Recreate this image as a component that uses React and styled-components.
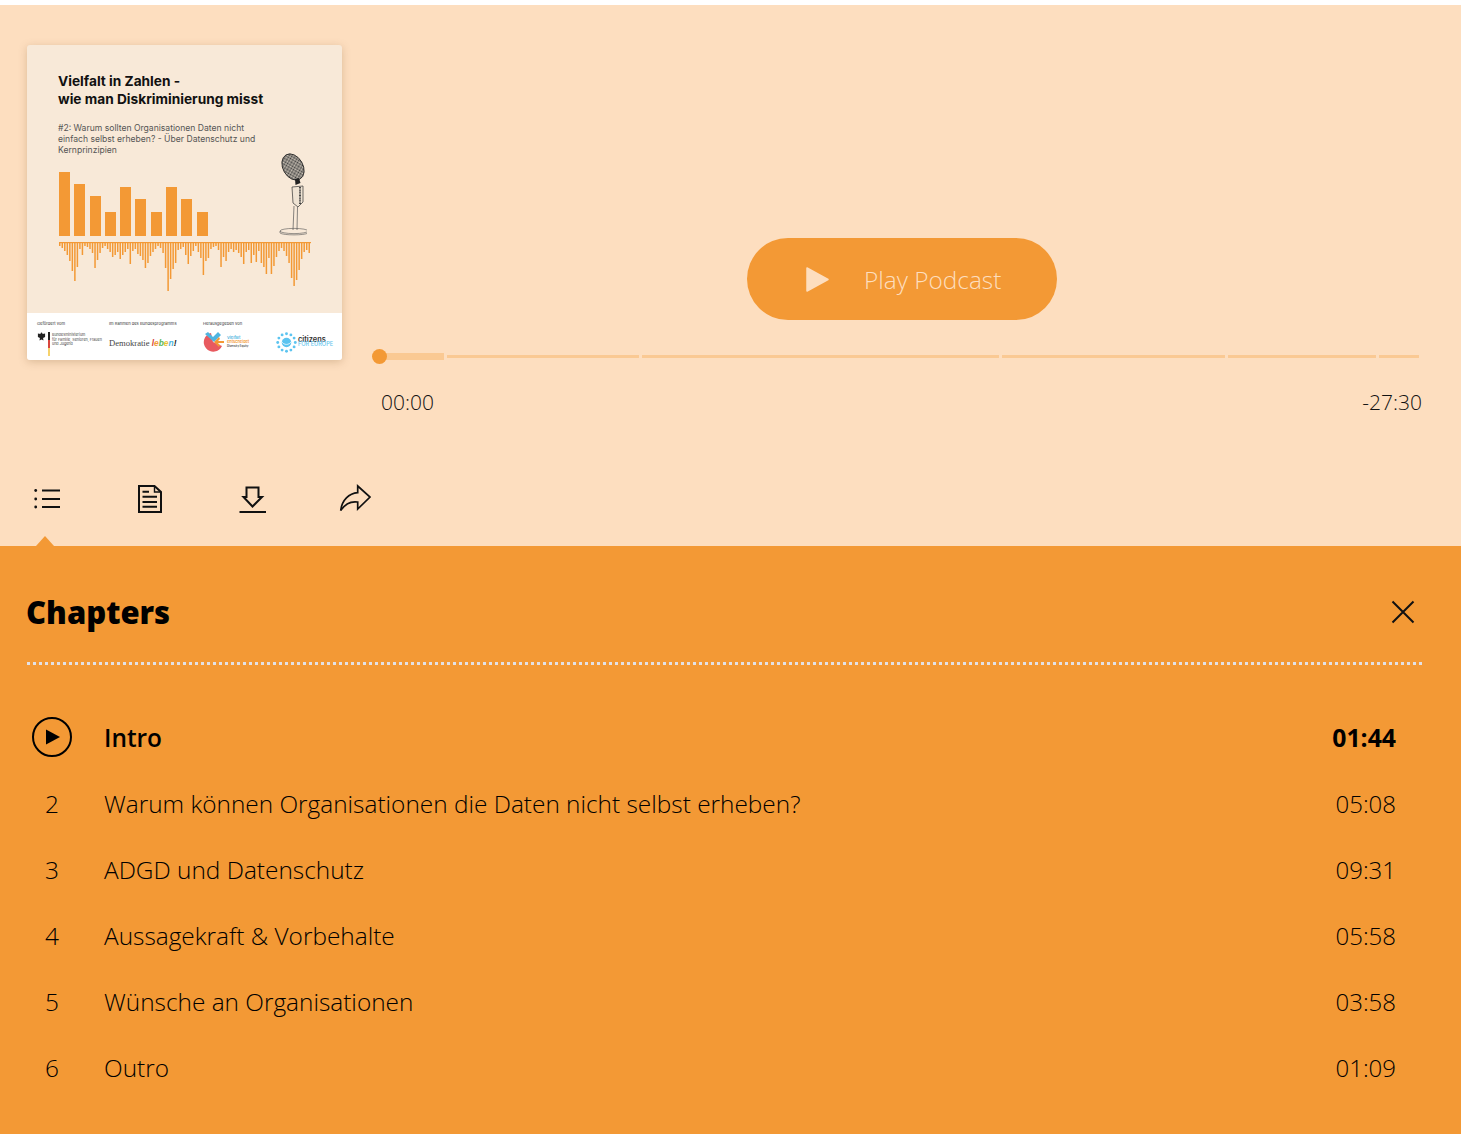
import React from "react";
import styled, { createGlobalStyle } from "styled-components";

const ORANGE = "#f39935";
const PEACH = "#fddebf";

const GlobalStyle = createGlobalStyle`
    html, body {
        margin: 0;
        padding: 0;
        background: #fff;
    }
    body {
        font-family: "Open Sans", "Noto Sans", sans-serif;
        color: #111;
    }
`;

const Page = styled.div`
    width: 1461px;
    height: 1134px;
    padding-top: 5px;
    box-sizing: border-box;
    overflow: hidden;
    display: flex;
    flex-direction: column;
`;
const Player = styled.section`
    background: ${PEACH};
    height: 541px;
    flex-shrink: 0;
    padding: 40px 39px 0 27px;
    box-sizing: border-box;
`;
const Header = styled.div`
    display: flex;
    gap: 36px;
    height: 434px;
`;

/* cover art */
const Cover = styled.div`
    width: 315px;
    height: 315px;
    flex-shrink: 0;
    border-radius: 3px;
    overflow: hidden;
    background: #f8e9d8;
    box-shadow: 0 2px 8px rgba(120, 80, 30, 0.25);
    display: flex;
    flex-direction: column;
    font-family: "Inter", "Liberation Sans", sans-serif;
`;
const Art = styled.div`
    height: 268px;
    padding: 28px 32px 0 31px;
    box-sizing: border-box;
`;
const CoverTitle = styled.div`
    font-size: 13.7px;
    font-weight: 700;
    line-height: 17.5px;
    color: #111;
`;
const CoverSub = styled.div`
    margin-top: 15px;
    width: 205px;
    font-size: 8.6px;
    line-height: 11px;
    color: #555;
`;
const BarsRow = styled.div`
    margin-top: 16px;
    margin-left: 1px;
    height: 64px;
    display: flex;
    justify-content: space-between;
    align-items: flex-end;
`;
const Bars = styled.div`
    display: flex;
    align-items: flex-end;
    gap: 4.3px;
`;
const Bar = styled.div`
    width: 11px;
    height: ${(p) => p.$h}px;
    background: ${ORANGE};
`;
const Mic = styled.svg`
    width: 30px;
    height: 84px;
    flex-shrink: 0;
    margin-right: 3px;
`;
const Wave = styled.svg`
    display: block;
    margin: 6px 0 0 1px;
    width: 252px;
    height: 50px;
`;
const Sponsors = styled.div`
    height: 47px;
    background: #fff;
    display: flex;
    padding: 8px 0 0 10px;
    box-sizing: border-box;
`;
const Sponsor = styled.div`
    width: ${(p) => p.$w}px;
    flex-shrink: 0;
`;
const SponsorLabel = styled.div`
    font-size: 4.1px;
    line-height: 5px;
    color: #333;
    white-space: nowrap;
`;
const SponsorBody = styled.div`
    margin-top: 6px;
    display: flex;
    align-items: flex-start;
    gap: ${(p) => p.$gap || 2}px;
`;
const TinyText = styled.div`
    font-size: 3.7px;
    line-height: 4.6px;
    color: #444;
    margin-top: 1px;
    white-space: nowrap;
`;
const Demokratie = styled.div`
    margin-top: 12px;
    font-family: "Liberation Serif", serif;
    font-size: 8.6px;
    line-height: 10px;
    color: #444;
    white-space: nowrap;
`;
const Leben = styled.span`
    font-family: "Liberation Sans", sans-serif;
    font-style: italic;
    font-weight: 700;
    font-size: 8.4px;
    color: ${(p) => p.$c};
`;
const LogoStack = styled.div`
    margin-top: 4px;
`;
const LogoText = styled.div`
    font-size: ${(p) => p.$s || 3.9}px;
    line-height: 4px;
    font-weight: 600;
    color: ${(p) => p.$c};
    white-space: nowrap;
`;
const EuroText = styled.div`
    margin-top: 6px;
    font-size: 7.4px;
    line-height: 4.4px;
    font-weight: 600;
    color: #333;
    white-space: nowrap;
`;
const EuroSub = styled.span`
    display: block;
    font-size: 5.6px;
    font-weight: 500;
    line-height: 5px;
    color: #66c6ee;
`;

/* player controls */
const Controls = styled.div`
    flex: 1;
    padding-top: 193px;
    min-width: 0;
`;
const PlayButton = styled.button`
    display: flex;
    align-items: center;
    width: 310px;
    height: 82px;
    margin: 0 0 29px 369px;
    padding: 0 0 0 59px;
    box-sizing: border-box;
    border: 0;
    border-radius: 41px;
    background: ${ORANGE};
    color: ${PEACH};
    font-family: inherit;
    font-weight: 300;
    font-size: 24.4px;
    gap: 35px;
`;
const Track = styled.div`
    position: relative;
    display: flex;
    align-items: center;
    gap: 3px;
    height: 15px;
    padding-right: 3px;
`;
const Knob = styled.div`
    position: absolute;
    left: -6px;
    top: 0;
    width: 15px;
    height: 15px;
    border-radius: 50%;
    background: ${ORANGE};
`;
const Segment = styled.div`
    flex: ${(p) => p.$w} 0 0;
    height: ${(p) => (p.$active ? 7 : 3)}px;
    background: #fac993;
`;
const Times = styled.div`
    display: flex;
    justify-content: space-between;
    margin-top: 23px;
    padding-left: 3px;
    font-size: 21px;
    font-weight: 300;
    line-height: 30px;
    color: #111;
`;

/* tab icons */
const Tabs = styled.div`
    display: flex;
    gap: 63px;
`;
const TabButton = styled.button`
    width: 40px;
    height: 40px;
    padding: 0;
    border: 0;
    background: none;
`;
const TabIcon = styled.svg`
    display: block;
    width: 40px;
    height: 40px;
    fill: none;
    stroke: #111;
    stroke-width: 2;
`;

/* chapters */
const Panel = styled.section`
    position: relative;
    flex: 1;
    background: ${ORANGE};
    padding: 0 39px 0 27px;

    &::before {
        content: "";
        position: absolute;
        left: 36px;
        top: -10px;
        border-left: 9.5px solid transparent;
        border-right: 9.5px solid transparent;
        border-bottom: 10px solid ${ORANGE};
    }
`;
const PanelHead = styled.div`
    display: flex;
    justify-content: space-between;
    align-items: center;
    height: 119px;
    padding-top: 16px;
    box-sizing: border-box;
    border-bottom: 3px dotted #e3e1e4;
`;
const PanelTitle = styled.h2`
    margin: 0 0 0 -1px;
    font-size: 31px;
    font-weight: 800;
    color: #000;
`;
const CloseButton = styled.button`
    width: 24px;
    height: 24px;
    padding: 0;
    margin-right: 7px;
    border: 0;
    background: none;
`;
const ChapterList = styled.ol`
    list-style: none;
    margin: 39px 0 0;
    padding: 0;
`;
const Chapter = styled.li`
    display: flex;
    align-items: center;
    height: 66px;
    font-size: 24.4px;
    font-weight: ${(p) => (p.$current ? 600 : 300)};
    color: #000;
`;
const ChapterNo = styled.div`
    width: 50px;
    text-align: center;
`;
const PlayingIcon = styled.svg`
    display: block;
    margin: 0 auto;
`;
const ChapterTitle = styled.div`
    flex: 1;
    margin-left: 27px;
`;
const ChapterTime = styled.div`
    margin-right: 26px;
    font-size: ${(p) => (p.$current ? 24.8 : 24)}px;
    font-weight: ${(p) => (p.$current ? 700 : 300)};
`;

const barHeights = [64, 52, 40, 24, 49, 37, 24, 49, 37, 24];
const waveDepths = [
    3, 5, 8, 12, 18, 28, 38, 24, 6, 12, 3, 4, 6, 10, 25, 17, 10, 5, 3, 6, 9, 14, 12, 9, 16,
    12, 9, 6, 21, 8, 6, 11, 13, 17, 25, 20, 13, 9, 6, 3, 5, 10, 25, 48, 36, 26, 20, 7, 6, 4,
    12, 21, 13, 8, 3, 9, 15, 32, 18, 15, 6, 4, 3, 7, 24, 14, 18, 9, 6, 9, 7, 10, 14, 21, 9,
    7, 20, 12, 19, 8, 20, 24, 31, 15, 31, 23, 14, 8, 5, 8, 13, 20, 35, 43, 37, 27, 16, 9, 7, 10,
];
const chapters = [
    { n: 1, title: "Intro", time: "01:44", w: 66 },
    { n: 2, title: "Warum können Organisationen die Daten nicht selbst erheben?", time: "05:08", w: 192 },
    { n: 3, title: "ADGD und Datenschutz", time: "09:31", w: 357 },
    { n: 4, title: "Aussagekraft & Vorbehalte", time: "05:58", w: 223 },
    { n: 5, title: "Wünsche an Organisationen", time: "03:58", w: 148 },
    { n: 6, title: "Outro", time: "01:09", w: 40 },
];
const ringDots = Array.from({ length: 12 }, (_, i) => (i * Math.PI) / 6);

const MicDrawing = () => (
    <Mic viewBox="0 0 30 84">
        <defs>
            <pattern id="mesh" width="2" height="2" patternUnits="userSpaceOnUse" patternTransform="rotate(-30)">
                <rect width="2" height="2" fill="#cfc6b9" />
                <rect width="1" height="1" fill="#333" />
                <rect x="1" y="1" width="1" height="1" fill="#555" />
            </pattern>
        </defs>
        <ellipse cx="16" cy="15" rx="10" ry="14" transform="rotate(-30 16 15)" fill="url(#mesh)" stroke="#222" strokeWidth="0.8" />
        <path d="M18 27 l4 -1 l1.5 5 l-5 2 z" fill="#222" />
        <path d="M15 35 L26 34 L26 50 L21 55 L16 51 Z" fill="#efe3d3" stroke="#333" strokeWidth="0.7" />
        <path d="M23 35 V52" stroke="#333" strokeWidth="1.8" strokeDasharray="1 0.6" />
        <path d="M17 54 L16 78 M20.5 55 L20 78" stroke="#555" strokeWidth="0.7" fill="none" />
        <ellipse cx="17" cy="79" rx="14" ry="2.6" fill="none" stroke="#555" strokeWidth="0.6" />
        <path d="M3 79 v2 c3 2.5 25 2.5 28 0 v-2" fill="none" stroke="#555" strokeWidth="0.6" />
    </Mic>
);

const Waveform = () => (
    <Wave viewBox="0 0 252 50">
        <rect width="252" height="1.2" fill={ORANGE} />
        {waveDepths.map((d, i) => (
            <rect key={i} x={i * 2.52} y="0" width="1.5" height={d + 1} fill={ORANGE} />
        ))}
    </Wave>
);

const Eagle = () => (
    <svg width="9" height="9" viewBox="0 0 8 9">
        <path d="M4 0.5 C5 0.5 5 2 5 2 L7.6 1.5 V5 L5.6 6 L6 8.5 L4 7.5 L2 8.5 L2.4 6 L0.4 5 V1.5 L3 2 C3 2 3 0.5 4 0.5 Z" fill="#222" />
    </svg>
);

const FlagBar = () => (
    <svg width="2" height="24" viewBox="0 0 2 24">
        <rect width="2" height="8" fill="#222" />
        <rect y="8" width="2" height="8" fill="#d8453c" />
        <rect y="16" width="2" height="8" fill="#f6d26c" />
    </svg>
);

const VielfaltLogo = () => (
    <svg width="21" height="20" viewBox="0 0 21 20">
        <path d="M8 1 L10 10 L19 14 A9.5 9.5 0 1 1 8 1 Z" fill="#e85a5f" />
        <path d="M2 2 L5 0 L10 5 L15 0 L18 3 L11 10 Z" fill="#4fb4e0" />
        <path d="M13 9 L21 9 L21 11 L13 11 Z M11 10 L16 5 L17 7 L14 10 L17 13 L16 15 Z" fill="#f39935" />
    </svg>
);

const CitizensLogo = () => (
    <svg width="21" height="21" viewBox="0 0 22 22">
        {ringDots.map((a, i) => (
            <circle key={i} cx={11 + 9.2 * Math.cos(a)} cy={11 + 9.2 * Math.sin(a)} r="1.5" fill="#5cc4f0" />
        ))}
        <circle cx="11" cy="11" r="5" fill="#5cc4f0" />
        <path d="M6 10 C8 14 14 14 16 10" stroke="#fff" strokeWidth="0.8" fill="none" />
    </svg>
);

const ListIcon = () => (
    <TabIcon viewBox="0 0 40 40">
        <path d="M15 11.5 H33 M15 20 H33 M15 28 H33" />
        <circle cx="8.7" cy="11.5" r="1.4" fill="#111" stroke="none" />
        <circle cx="8.7" cy="20" r="1.4" fill="#111" stroke="none" />
        <circle cx="8.7" cy="28" r="1.4" fill="#111" stroke="none" />
    </TabIcon>
);
const DocIcon = () => (
    <TabIcon viewBox="0 0 40 40">
        <path d="M9 7 H24.5 L31 13 V33 H9 Z" />
        <path d="M24.5 7 V13 H31" strokeWidth="1.4" />
        <path d="M12.5 12.7 H19 M12.5 17.7 H27 M12.5 23 H27 M12.5 27.7 H27" />
    </TabIcon>
);
const DownloadIcon = () => (
    <TabIcon viewBox="0 0 40 40">
        <path d="M13.5 8.5 H25.5 V18 H29 L19.5 27.5 L10.5 18 H13.5 Z" />
        <path d="M6.5 33 H33" />
    </TabIcon>
);
const ShareIcon = () => (
    <TabIcon viewBox="0 0 40 40">
        <path d="M21.7 7 L34 18 L21.7 30 V23 C15 22 9 25 4.7 31.5 C6 21 13 14.5 21.7 13.7 Z" strokeWidth="1.7" />
    </TabIcon>
);

const App = () => {
    return (
        <Page>
            <GlobalStyle />
            <Player>
                <Header>
                    <Cover>
                        <Art>
                            <CoverTitle>
                                Vielfalt in Zahlen -
                                <br />
                                wie man Diskriminierung misst
                            </CoverTitle>
                            <CoverSub>
                                #2: Warum sollten Organisationen Daten nicht einfach selbst erheben? - Über Datenschutz und Kernprinzipien
                            </CoverSub>
                            <BarsRow>
                                <Bars>
                                    {barHeights.map((h, i) => (
                                        <Bar key={i} $h={h} />
                                    ))}
                                </Bars>
                                <MicDrawing />
                            </BarsRow>
                            <Waveform />
                        </Art>
                        <Sponsors>
                            <Sponsor $w={72}>
                                <SponsorLabel>Gefördert vom</SponsorLabel>
                                <SponsorBody>
                                    <Eagle />
                                    <FlagBar />
                                    <TinyText>
                                        Bundesministerium
                                        <br />
                                        für Familie, Senioren, Frauen
                                        <br />
                                        und Jugend
                                    </TinyText>
                                </SponsorBody>
                            </Sponsor>
                            <Sponsor $w={94}>
                                <SponsorLabel>Im Rahmen des Bundesprogramms</SponsorLabel>
                                <Demokratie>
                                    Demokratie <Leben $c="#d8453c">l</Leben>
                                    <Leben $c="#f39935">e</Leben>
                                    <Leben $c="#5cb85c">b</Leben>
                                    <Leben $c="#e9c32f">e</Leben>
                                    <Leben $c="#4fb4e0">n</Leben>
                                    <Leben $c="#222">!</Leben>
                                </Demokratie>
                            </Sponsor>
                            <Sponsor $w={73}>
                                <SponsorLabel>Herausgegeben von</SponsorLabel>
                                <SponsorBody $gap={3}>
                                    <VielfaltLogo />
                                    <LogoStack>
                                        <LogoText $c="#4fb4e0">Vielfalt</LogoText>
                                        <LogoText $c="#f39935">entscheidet</LogoText>
                                        <LogoText $c="#444" $s={2.8}>Diversity Equity</LogoText>
                                    </LogoStack>
                                </SponsorBody>
                            </Sponsor>
                            <Sponsor $w={60}>
                                <SponsorLabel>&nbsp;</SponsorLabel>
                                <SponsorBody $gap={1}>
                                    <CitizensLogo />
                                    <EuroText>
                                        citizens
                                        <EuroSub>FOR EUROPE</EuroSub>
                                    </EuroText>
                                </SponsorBody>
                            </Sponsor>
                        </Sponsors>
                    </Cover>
                    <Controls>
                        <PlayButton>
                            <svg width="23" height="25" viewBox="0 0 23 25">
                                <path d="M1 1 L22 12.5 L1 24 Z" fill={PEACH} stroke={PEACH} strokeWidth="1.5" strokeLinejoin="round" />
                            </svg>
                            Play Podcast
                        </PlayButton>
                        <Track>
                            {chapters.map((c, i) => (
                                <Segment key={c.n} $w={c.w} $active={i === 0} />
                            ))}
                            <Knob />
                        </Track>
                        <Times>
                            <span>00:00</span>
                            <span>-27:30</span>
                        </Times>
                    </Controls>
                </Header>
                <Tabs>
                    <TabButton aria-label="Chapters"><ListIcon /></TabButton>
                    <TabButton aria-label="Transcript"><DocIcon /></TabButton>
                    <TabButton aria-label="Download"><DownloadIcon /></TabButton>
                    <TabButton aria-label="Share"><ShareIcon /></TabButton>
                </Tabs>
            </Player>
            <Panel>
                <PanelHead>
                    <PanelTitle>Chapters</PanelTitle>
                    <CloseButton aria-label="Close">
                        <svg width="24" height="24" viewBox="0 0 24 24" fill="none" stroke="#111" strokeWidth="2">
                            <path d="M1.5 1.5 L22.5 22.5 M22.5 1.5 L1.5 22.5" />
                        </svg>
                    </CloseButton>
                </PanelHead>
                <ChapterList>
                    {chapters.map((c, i) => (
                        <Chapter key={c.n} $current={i === 0}>
                            <ChapterNo>
                                {i === 0 ? (
                                    <PlayingIcon width="42" height="42" viewBox="0 0 42 42">
                                        <circle cx="21" cy="21" r="19" fill="none" stroke="#000" strokeWidth="2" />
                                        <path d="M15 13.5 L29 21 L15 28.5 Z" fill="#000" />
                                    </PlayingIcon>
                                ) : (
                                    c.n
                                )}
                            </ChapterNo>
                            <ChapterTitle>{c.title}</ChapterTitle>
                            <ChapterTime $current={i === 0}>{c.time}</ChapterTime>
                        </Chapter>
                    ))}
                </ChapterList>
            </Panel>
        </Page>
    );
};

export default App;
